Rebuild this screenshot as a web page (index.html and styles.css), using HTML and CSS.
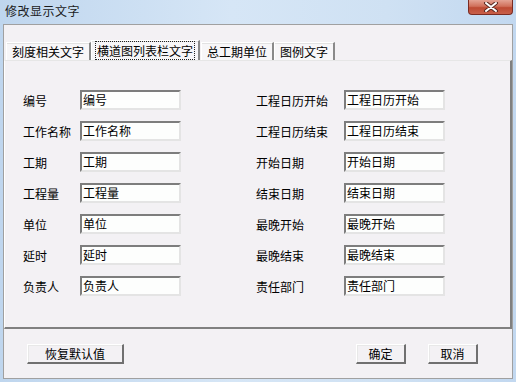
FILE: index.html
```html
<!DOCTYPE html>
<html lang="zh-CN">
<head>
    <meta charset="UTF-8">
    <title>修改显示文字</title>
    <link rel="stylesheet" href="styles.css">
</head>
<body>
    <div class="window">
        <!-- Barra de título -->
        <div class="titlebar">
            <span class="title">修改显示文字</span>
            <div class="close-btn">
                <svg width="16" height="10" viewBox="0 0 16 10">
                    <path d="M3 1 L13 9 M13 1 L3 9" stroke="#5a2a22" stroke-width="4" stroke-linecap="round"/>
                    <path d="M3 1 L13 9 M13 1 L3 9" stroke="#ffffff" stroke-width="2" stroke-linecap="round"/>
                </svg>
            </div>
        </div>

        <div class="client">
            <div class="tabs">
                <div class="tab">刻度相关文字</div>
                <div class="tab active"><span class="focus">横道图列表栏文字</span></div>
                <div class="tab">总工期单位</div>
                <div class="tab">图例文字</div>
            </div>

            <div class="panel">
                <div class="form-col left-col">
                    <label>编号</label><div class="field">编号</div>
                    <label>工作名称</label><div class="field">工作名称</div>
                    <label>工期</label><div class="field">工期</div>
                    <label>工程量</label><div class="field">工程量</div>
                    <label>单位</label><div class="field">单位</div>
                    <label>延时</label><div class="field">延时</div>
                    <label>负责人</label><div class="field">负责人</div>
                </div>
                <div class="form-col right-col">
                    <label>工程日历开始</label><div class="field">工程日历开始</div>
                    <label>工程日历结束</label><div class="field">工程日历结束</div>
                    <label>开始日期</label><div class="field">开始日期</div>
                    <label>结束日期</label><div class="field">结束日期</div>
                    <label>最晚开始</label><div class="field">最晚开始</div>
                    <label>最晚结束</label><div class="field">最晚结束</div>
                    <label>责任部门</label><div class="field">责任部门</div>
                </div>
            </div>

            <div class="footer">
                <button class="btn btn-wide">恢复默认值</button>
                <div class="spacer"></div>
                <button class="btn">确定</button>
                <button class="btn">取消</button>
            </div>
        </div>
    </div>
</body>
</html>
```

FILE: styles.css
```css
/* Janela */
body {
    margin: 0;
    font-family: "Noto Sans CJK SC", "Liberation Sans", sans-serif;
    font-size: 12px;
    color: #000;
    background-color: #c3d9ef;
}

.window {
    width: 516px;
    height: 382px;
    box-sizing: border-box;
    padding: 0 3px 3px 3px;
    background: linear-gradient(to right, #bfd6ee 0%, #d6e6f6 45%, #cfe1f3 75%, #c2d8f0 100%);
    display: flex;
    flex-direction: column;
}

.titlebar {
    height: 24px;
    position: relative;
    flex-shrink: 0;
}

.title {
    position: absolute;
    left: 2px;
    top: 3px;
    line-height: 16px;
    color: #1b1b1b;
    letter-spacing: 0.5px;
}

.close-btn {
    position: absolute;
    right: 0;
    top: 0;
    width: 45px;
    height: 15px;
    box-sizing: border-box;
    border: 1px solid #7a2b22;
    border-top: none;
    border-radius: 0 0 4px 4px;
    background: linear-gradient(to bottom, #e4a394 0%, #d0705b 45%, #bd4a33 55%, #c8604a 100%);
    display: flex;
    align-items: center;
    justify-content: center;
}

.client {
    flex: 1;
    background-color: #f3f1f4;
    border: 1px solid #a0a0a0;
    display: flex;
    flex-direction: column;
}

/* Abas */
.tabs {
    display: flex;
    align-items: flex-end;
    height: 35px;
    padding-left: 2px;
}

.tab {
    height: 17px;
    line-height: 17px;
    padding: 0 5px;
    background-color: #f7f6f8;
    border-top: 1px solid #ffffff;
    border-left: 1px solid #ffffff;
    border-right: 2px solid #8a8a8a;
    box-shadow: inset 0 1px 0 #e2e2e2;
    white-space: nowrap;
}

.tab.active {
    height: 19px;
    line-height: 19px;
    padding: 0 3px;
    margin-right: 1px;
}

.focus {
    border: 1px dotted #222;
    padding: 0 1px;
}

/* Painel */
.panel {
    height: 269px;
    margin: 0 0 0 0;
    box-sizing: border-box;
    border-top: 1px solid #e6e6e6;
    border-left: 1px solid #ffffff;
    border-right: 2px solid #808080;
    border-bottom: 2px solid #808080;
    display: flex;
    padding: 29px 0 0 18px;
}

.form-col {
    display: grid;
    grid-auto-rows: 20px;
    row-gap: 11px;
    align-items: center;
}

.left-col {
    grid-template-columns: 57px 101px;
}

.right-col {
    grid-template-columns: 88px 101px;
    margin-left: 75px;
}

label {
    white-space: nowrap;
}

.field {
    height: 20px;
    box-sizing: border-box;
    line-height: 16px;
    padding-left: 1px;
    background-color: #fdfefd;
    border-top: 2px solid #7d7d7d;
    border-left: 2px solid #7d7d7d;
    border-right: 2px solid #e4e4e4;
    border-bottom: 2px solid #e4e4e4;
}

/* Rodapé com botões */
.footer {
    flex: 1;
    display: flex;
    align-items: flex-start;
    padding: 15px 34px 0 23px;
}

.spacer {
    flex: 1;
}

.btn {
    width: 50px;
    height: 20px;
    padding: 0;
    font-family: inherit;
    font-size: 12px;
    color: #000;
    background-color: #f3f1f4;
    border-top: 1px solid #ffffff;
    border-left: 1px solid #ffffff;
    border-right: 2px solid #707070;
    border-bottom: 2px solid #707070;
    box-shadow: inset 0 1px 0 #e8e8e8, inset 1px 0 0 #e8e8e8;
    margin-left: 22px;
}

.btn-wide {
    width: 97px;
    margin-left: 0;
}
```
